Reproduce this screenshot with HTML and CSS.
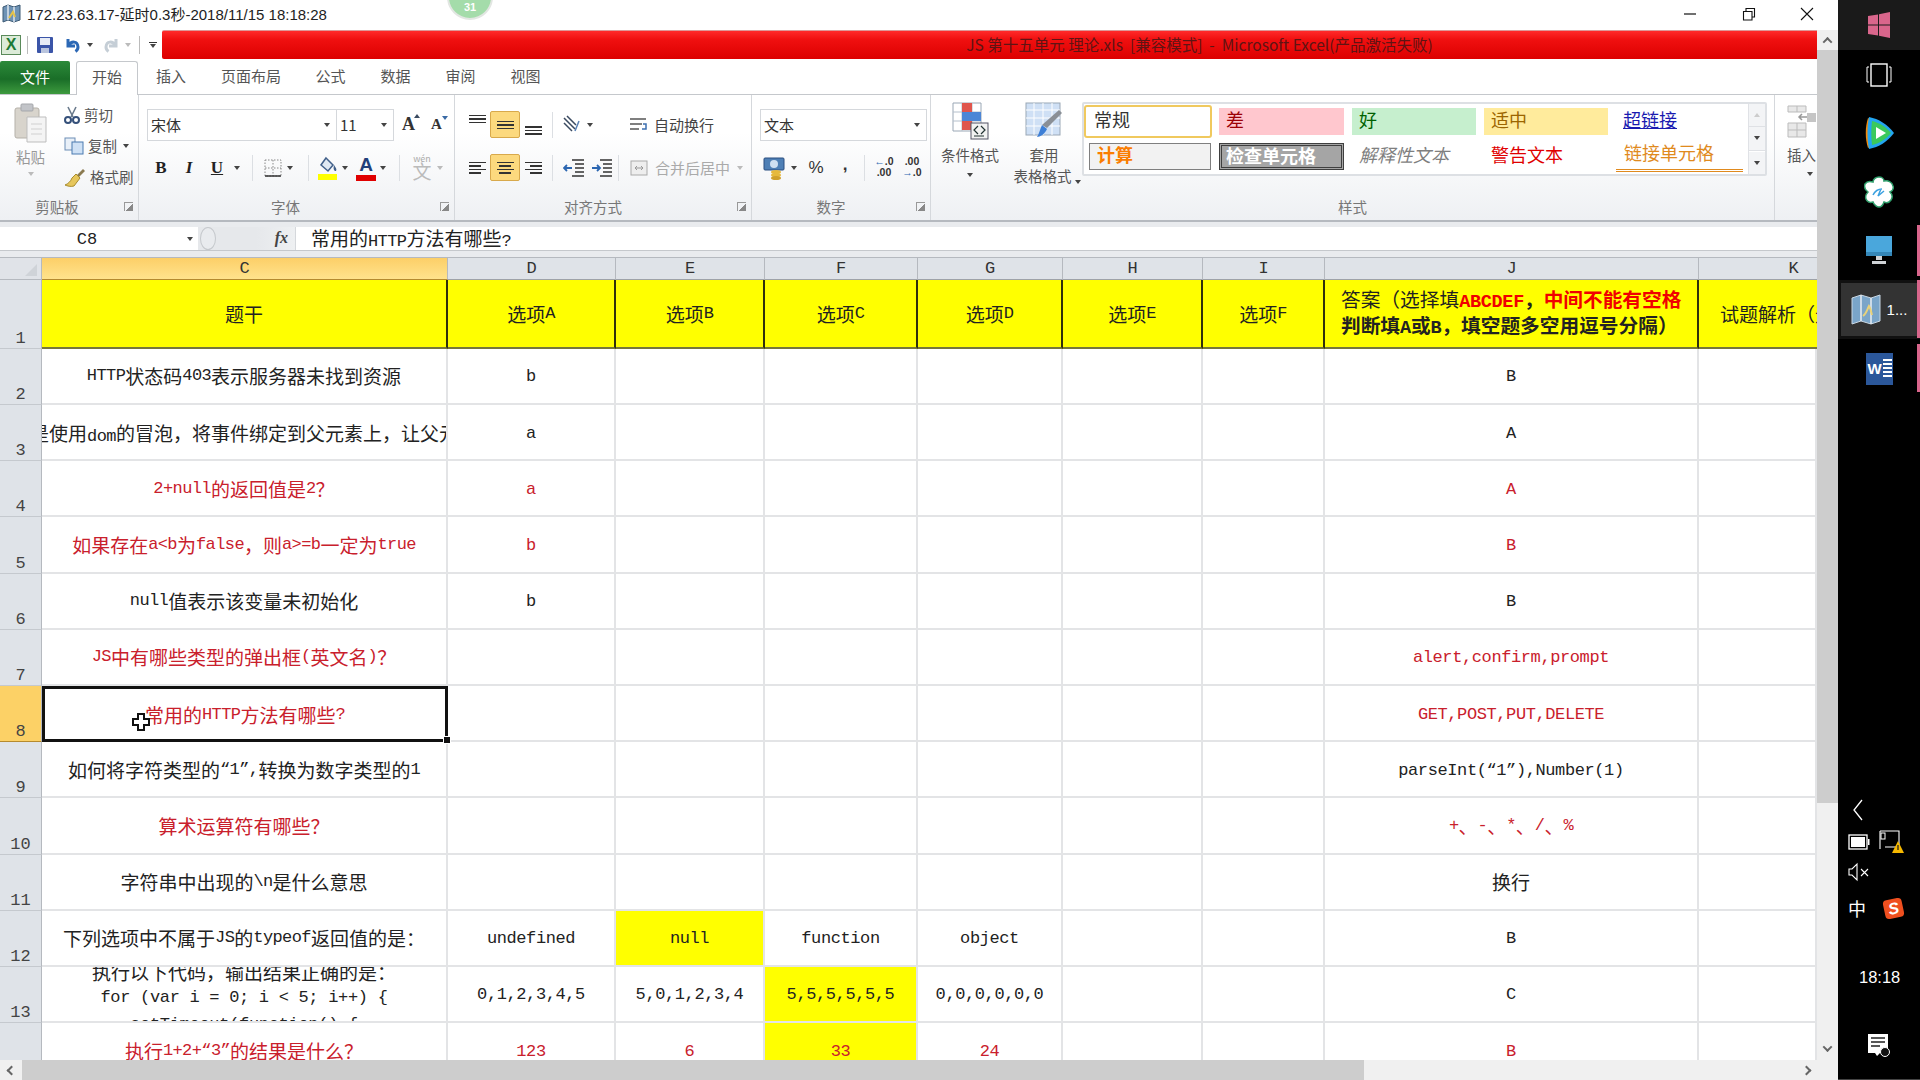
FILE: index.html
```html
<!DOCTYPE html>
<html lang="zh-CN">
<head>
    <meta charset="UTF-8">
    <title>JS 第十五单元 理论.xls - Microsoft Excel</title>
    <link rel="stylesheet" href="styles.css">
</head>
<body>
<div class="app">
    <div class="titlebar">
        <svg class="title-icon" width="19" height="19" viewBox="0 0 19 19"><path d="M1 3l5-2 6 2 6-2v15l-6 2-6-2-5 2z" fill="#6f93b5" stroke="#3d5a75"/><path d="M6 1v15M12 3v15" stroke="#dfe8ef" stroke-width="1.5"/><path d="M7 14l4-6 2 5" stroke="#e6c34a" stroke-width="2" fill="none"/></svg>
        <span class="title-text">172.23.63.17-延时0.3秒-2018/11/15 18:18:28</span>
        <div class="badge">31</div>
        <div class="win-btns">
            <svg width="14" height="14" viewBox="0 0 14 14"><path d="M1 7h12" stroke="#111" stroke-width="1.2"/></svg>
            <svg width="14" height="14" viewBox="0 0 14 14"><path d="M1.5 4.5h8.500v8.500h-8.500zM4 4.500v-3h8.500v8.500h-2.500" fill="none" stroke="#111" stroke-width="1.1"/></svg>
            <svg width="14" height="14" viewBox="0 0 14 14"><path d="M1 1l12 12M13 1l-12 12" stroke="#111" stroke-width="1.1"/></svg>
        </div>
    </div>

    <div class="main">
        <div class="workbook">
            <div class="qat">
                <span class="xl-logo">X</span>
                <i class="qat-sep"></i>
                <svg class="q-save" width="18" height="18" viewBox="0 0 18 18"><rect x="1" y="1" width="16" height="16" rx="1" fill="#3b55a8"/><rect x="4" y="2" width="10" height="7" fill="#e6ebf5"/><rect x="5" y="12" width="8" height="5" fill="#b9c4dd"/></svg>
                <svg class="q-undo" width="18" height="18" viewBox="0 0 18 18"><path d="M4 3v7h7M4.500 9.500c3-5 9-4.500 9.500 1.500 0 2-1 3.500-2.500 4.500" fill="none" stroke="#2c68b5" stroke-width="3"/></svg>
                <i class="caret q-car1"></i>
                <svg class="q-redo" width="18" height="18" viewBox="0 0 18 18"><path d="M14 3v7h-7M13.500 9.500c-3-5-9-4.500-9.500 1.500 0 2 1 3.500 2.500 4.500" fill="none" stroke="#c5ced6" stroke-width="3"/></svg>
                <i class="caret light q-car2"></i>
                <i class="qat-sep q-sep2"></i>
                <span class="q-more"><i></i><b class="caret"></b></span>
                <div class="redbar">JS 第十五单元 理论.xls&nbsp; [兼容模式]&nbsp; -&nbsp; Microsoft Excel(产品激活失败)</div>
            </div>

            <div class="tabs">
                <span class="tab-file">文件</span>
                <span class="tab tab-on">开始</span>
                <span class="tab t1">插入</span>
                <span class="tab t2">页面布局</span>
                <span class="tab t3">公式</span>
                <span class="tab t3">数据</span>
                <span class="tab t3">审阅</span>
                <span class="tab t3">视图</span>
            </div>

            <div class="ribbon">
                <!-- clipboard -->
                <div class="group g-clip">
                    <div class="group-body clip-body">
                        <div class="paste">
                            <svg width="34" height="40" viewBox="0 0 34 40"><rect x="1" y="5" width="24" height="30" rx="2" fill="#d8d4cc" stroke="#b5b1a9"/><rect x="7" y="1" width="12" height="7" rx="1" fill="#c2c4c8" stroke="#a5a7ab"/><path d="M13 14h19v25h-19z" fill="#f4f4f4" stroke="#bdbdbd"/><path d="M17 21h11M17 26h11M17 31h11" stroke="#d0d0d0"/></svg>
                            <span class="muted">粘贴</span>
                            <i class="caret light"></i>
                        </div>
                        <div class="clip-list">
                            <div class="clip-item"><svg width="16" height="18" viewBox="0 0 16 18"><path d="M4 1l5 10M12 1l-5 10" stroke="#6a7a8c" stroke-width="1.6"/><circle cx="4" cy="14" r="3" fill="none" stroke="#35507a" stroke-width="2"/><circle cx="12" cy="14" r="3" fill="none" stroke="#35507a" stroke-width="2"/></svg><span>剪切</span></div>
                            <div class="clip-item"><svg width="20" height="18" viewBox="0 0 20 18"><rect x="1" y="1" width="10" height="12" fill="#e9f0f8" stroke="#6d8db5"/><rect x="8" y="5" width="11" height="12" fill="#cfe1f5" stroke="#4b7ab0"/></svg><span>复制</span><i class="caret"></i></div>
                            <div class="clip-item"><svg width="22" height="20" viewBox="0 0 22 20"><path d="M13 8l6-6 2 2-6 6z" fill="#8a7a50"/><path d="M12 7l4 4-6 8c-3 1-7 0-9-1 3-1 6-4 7-7z" fill="#e6c65c" stroke="#a88c2e"/></svg><span>格式刷</span></div>
                        </div>
                    </div>
                    <div class="group-label pad-24">剪贴板<i class="launcher"></i></div>
                </div>

                <!-- font -->
                <div class="group g-font">
                    <div class="group-body">
                        <div class="rb-row">
                            <div class="combo combo-font"><span>宋体</span><i class="caret"></i></div>
                            <div class="combo combo-size"><span>11</span><i class="caret"></i></div>
                            <span class="grow">A<em class="tri up"></em></span>
                            <span class="grow small">A<em class="tri down"></em></span>
                        </div>
                        <div class="rb-row row2">
                            <span class="tb fmt"><b>B</b></span>
                            <span class="tb fmt"><i>I</i></span>
                            <span class="tb fmt"><u>U</u></span>
                            <i class="caret cw"></i>
                            <i class="sep s9"></i>
                            <span class="tb w22"><svg width="20" height="20" viewBox="0 0 20 20"><path d="M2 2h16v16h-16zM2 10h16M10 2v16" fill="none" stroke="#888" stroke-dasharray="1.500 1.500"/><path d="M2 18h16" stroke="#333" stroke-width="1.500"/></svg></span>
                            <i class="caret cw"></i>
                            <i class="sep s12"></i>
                            <span class="tb w22 ml8"><svg width="22" height="24" viewBox="0 0 22 24"><path d="M9 2l7 7-5 6-7-6z" fill="#dfe8f2" stroke="#41608a" stroke-width="1.500"/><path d="M17 9c2 3 3 4 2 6-2 0-3-2-2-6z" fill="#41608a"/><rect x="1" y="18" width="19" height="6" fill="#ffff00"/></svg></span>
                            <i class="caret cw"></i>
                            <span class="tb w22 ml4 color-a">A<em></em></span>
                            <i class="caret cw"></i>
                            <i class="sep s10"></i>
                            <span class="tb w24 wen"><small>wén</small>文</span>
                            <i class="caret cw light"></i>
                        </div>
                    </div>
                    <div class="group-label pad-22">字体<i class="launcher"></i></div>
                </div>

                <!-- alignment -->
                <div class="group g-align">
                    <div class="group-body">
                        <div class="rb-row">
                            <span class="tb"><span class="lines at-top"><i></i><i></i><i></i></span></span>
                            <span class="tb on"><span class="lines"><i></i><i></i><i></i></span></span>
                            <span class="tb"><span class="lines at-bot"><i></i><i></i><i></i></span></span>
                            <i class="sep a-sep"></i>
                            <span class="tb w34"><svg width="24" height="20" viewBox="0 0 24 20"><path d="M3 3l11 11M6 1l9 9M3 8l8 8" stroke="#3a4a60" stroke-width="1.500"/><path d="M14 16l4-10" stroke="#5a82b5" stroke-width="1.500"/></svg><i class="caret inline"></i></span>
                            <span class="wide-cmd"><svg width="18" height="18" viewBox="0 0 18 18"><path d="M1 3h16M1 8h12M1 13h9" stroke="#555" stroke-width="1.500"/><path d="M14 8h3v5h-4" fill="none" stroke="#3d6fb0" stroke-width="1.500"/></svg><span>自动换行</span></span>
                        </div>
                        <div class="rb-row row2">
                            <span class="tb"><span class="lines four ln-left"><i></i><i></i><i></i><i></i></span></span>
                            <span class="tb on"><span class="lines four"><i></i><i></i><i></i><i></i></span></span>
                            <span class="tb"><span class="lines four ln-right"><i></i><i></i><i></i><i></i></span></span>
                            <i class="sep a-sep"></i>
                            <span class="tb indent"><svg width="22" height="20" viewBox="0 0 22 20"><path d="M9 2h12M12 6h9M12 10h9M12 14h9M9 18h12" stroke="#333" stroke-width="1.500"/><path d="M9 10h-8M4 7l-3 3 3 3" fill="none" stroke="#2b66b1" stroke-width="1.800"/></svg></span>
                            <span class="tb indent"><svg width="22" height="20" viewBox="0 0 22 20"><path d="M9 2h12M12 6h9M12 10h9M12 14h9M9 18h12" stroke="#333" stroke-width="1.500"/><path d="M1 10h8M6 7l3 3-3 3" fill="none" stroke="#2b66b1" stroke-width="1.800"/></svg></span>
                            <i class="sep m-sep"></i>
                            <span class="wide-cmd off"><svg width="18" height="18" viewBox="0 0 18 18"><rect x="1" y="2" width="16" height="14" fill="#eee" stroke="#aaa"/><path d="M5 9h8M7 7l-2 2 2 2M11 7l2 2-2 2" fill="none" stroke="#999"/></svg><span>合并后居中</span><i class="caret light"></i></span>
                        </div>
                    </div>
                    <div class="group-label pad-20">对齐方式<i class="launcher"></i></div>
                </div>

                <!-- number -->
                <div class="group g-num">
                    <div class="group-body">
                        <div class="rb-row">
                            <div class="combo combo-num"><span>文本</span><i class="caret"></i></div>
                        </div>
                        <div class="rb-row row2">
                            <span class="tb"><svg width="22" height="24" viewBox="0 0 22 24"><rect x="1" y="2" width="20" height="12" rx="1" fill="#4e7fb5" stroke="#2a4f80"/><circle cx="11" cy="8" r="4" fill="#cfe0f2"/><ellipse cx="13" cy="16" rx="5" ry="2" fill="#e6b93c"/><ellipse cx="13" cy="19" rx="5" ry="2" fill="#e6b93c"/><ellipse cx="13" cy="22" rx="5" ry="2" fill="#d0a02a"/></svg></span>
                            <i class="caret cw"></i>
                            <span class="tb sym mlt">%</span>
                            <span class="tb sym comma">,</span>
                            <i class="sep s5"></i>
                            <span class="tb dec"><em>←</em>.0<br>.00</span>
                            <span class="tb dec">.00<br><em>→</em>.0</span>
                        </div>
                    </div>
                    <div class="group-label pad-20">数字<i class="launcher"></i></div>
                </div>

                <!-- styles -->
                <div class="group g-style">
                    <div class="group-body style-body">
                        <div class="big-cmd">
                            <svg width="37" height="38" viewBox="0 0 37 38"><path d="M1 1h28v28h-28z" fill="#fff" stroke="#9aa7b5"/><path d="M1 10h28M1 19h28M10 1v28M20 1v28" stroke="#b5c0cc"/><rect x="10" y="1" width="10" height="9" fill="#e0554c"/><rect x="10" y="10" width="10" height="9" fill="#4c86d6"/><rect x="20" y="10" width="9" height="9" fill="#4c86d6"/><rect x="10" y="19" width="10" height="9" fill="#e0554c"/><rect x="19" y="21" width="17" height="16" fill="#f2f2f2" stroke="#556"/><path d="M26 24l-4 4 4 4M22 34h10M29 24l4 4-4 4" fill="none" stroke="#233" stroke-width="1.200"/></svg>
                            <span>条件格式</span>
                            <i class="caret"></i>
                        </div>
                        <div class="big-cmd table-cmd">
                            <svg width="38" height="38" viewBox="0 0 38 38"><rect x="1" y="1" width="34" height="32" fill="#cfe0f5" stroke="#9aa7b5"/><path d="M1 8h34M1 16h34M1 24h34M9 1v32M18 1v32M27 1v32" stroke="#fff"/><path d="M34 8l3 3-15 15-5-3z" fill="#8a8f96"/><path d="M17 23l5 4c-2 5-7 8-10 8 2-3 3-8 5-12z" fill="#3d7fd6"/></svg>
                            <span>套用</span>
                            <span class="cmd-line">表格格式<i class="caret"></i></span>
                        </div>
                        <div class="gallery">
                            <div class="styles-grid">
                                <span class="st st-normal">常规</span>
                                <span class="st st-bad">差</span>
                                <span class="st st-good">好</span>
                                <span class="st st-neutral">适中</span>
                                <span class="st st-link">超链接</span>
                                <span class="st st-calc">计算</span>
                                <span class="st st-check">检查单元格</span>
                                <span class="st st-note">解释性文本</span>
                                <span class="st st-warn">警告文本</span>
                                <span class="st st-linked">链接单元格</span>
                            </div>
                            <div class="gal-scroll">
                                <span><i class="caret up light"></i></span>
                                <span><i class="caret"></i></span>
                                <span class="more"><i class="caret"></i></span>
                            </div>
                        </div>
                    </div>
                    <div class="group-label">样式</div>
                </div>

                <!-- cells -->
                <div class="group g-cells">
                    <div class="group-body insert">
                        <svg width="29" height="34" viewBox="0 0 29 34"><path d="M1 2h18v6h-18zM10 2v6M1 19h18v14h-18zM1 26h18M10 19v14" fill="#e8e8e8" stroke="#bbb"/><path d="M20 13h-8M15 10l-3 3 3 3" fill="none" stroke="#999" stroke-width="1.500"/><rect x="20" y="9" width="9" height="9" fill="#c5c5c5"/></svg>
                        <span>插入</span>
                        <i class="caret"></i>
                    </div>
                </div>
            </div>

            <div class="formula-bar">
                <div class="name-box"><span>C8</span><i class="caret"></i></div>
                <div class="fx-area"><i class="fx-knob"></i><em>fx</em></div>
                <div class="formula-input">常用的<span class="m">HTTP</span>方法有哪些<span class="m">?</span></div>
            </div>

            <div class="sheet">
                <div class="corner"><i></i></div>
                <div class="ch sel">C</div><div class="ch">D</div><div class="ch">E</div><div class="ch">F</div><div class="ch">G</div><div class="ch">H</div><div class="ch">I</div><div class="ch">J</div><div class="ch ch-k">K</div>

                <div class="rh">1</div>
                <div class="c hd">题干</div><div class="c hd">选项<span class="m">A</span></div><div class="c hd">选项<span class="m">B</span></div><div class="c hd">选项<span class="m">C</span></div><div class="c hd">选项<span class="m">D</span></div><div class="c hd">选项<span class="m">E</span></div><div class="c hd">选项<span class="m">F</span></div>
                <div class="c hd hd-answer"><div>答案（选择填<b class="red-b m">ABCDEF</b><b>，</b><b class="red-b">中间不能有空格</b><br><b>判断填<span class="m">A</span>或<span class="m">B</span>，填空题多空用逗号分隔）</b></div></div>
                <div class="c hd hd-left">试题解析（无</div>

                <div class="rh">2</div>
                <div class="c"><span class="m">HTTP</span>状态码<span class="m">403</span>表示服务器未找到资源</div><div class="c m">b</div><div class="c"></div><div class="c"></div><div class="c"></div><div class="c"></div><div class="c"></div><div class="c m">B</div><div class="c"></div>

                <div class="rh">3</div>
                <div class="c"><span class="nw">事件委托就是使用<span class="m">dom</span>的冒泡，将事件绑定到父元素上，让父元素响应事件</span></div><div class="c m">a</div><div class="c"></div><div class="c"></div><div class="c"></div><div class="c"></div><div class="c"></div><div class="c m">A</div><div class="c"></div>

                <div class="rh">4</div>
                <div class="c red"><span class="m">2+null</span>的返回值是<span class="m">2</span>？</div><div class="c m red">a</div><div class="c"></div><div class="c"></div><div class="c"></div><div class="c"></div><div class="c"></div><div class="c m red">A</div><div class="c"></div>

                <div class="rh">5</div>
                <div class="c red">如果存在<span class="m">a&lt;b</span>为<span class="m">false</span>，则<span class="m">a&gt;=b</span>一定为<span class="m">true</span></div><div class="c m red">b</div><div class="c"></div><div class="c"></div><div class="c"></div><div class="c"></div><div class="c"></div><div class="c m red">B</div><div class="c"></div>

                <div class="rh">6</div>
                <div class="c"><span class="m">null</span>值表示该变量未初始化</div><div class="c m">b</div><div class="c"></div><div class="c"></div><div class="c"></div><div class="c"></div><div class="c"></div><div class="c m">B</div><div class="c"></div>

                <div class="rh">7</div>
                <div class="c red"><span class="m">JS</span>中有哪些类型的弹出框<span class="m">(</span>英文名<span class="m">)</span>？</div><div class="c"></div><div class="c"></div><div class="c"></div><div class="c"></div><div class="c"></div><div class="c"></div><div class="c m red">alert,confirm,prompt</div><div class="c"></div>

                <div class="rh sel">8</div>
                <div class="c red active">常用的<span class="m">HTTP</span>方法有哪些<span class="m">?</span>
                    <i class="fill-handle"></i>
                    <svg class="cell-cursor" width="20" height="20" viewBox="0 0 20 20"><path d="M7 2h6v5h5v6h-5v5h-6v-5h-5v-6h5z" fill="#fff" stroke="#111" stroke-width="2"/></svg>
                </div><div class="c"></div><div class="c"></div><div class="c"></div><div class="c"></div><div class="c"></div><div class="c"></div><div class="c m red">GET,POST,PUT,DELETE</div><div class="c"></div>

                <div class="rh">9</div>
                <div class="c">如何将字符类型的<span class="m">“1”,</span>转换为数字类型的<span class="m">1</span></div><div class="c"></div><div class="c"></div><div class="c"></div><div class="c"></div><div class="c"></div><div class="c"></div><div class="c m">parseInt(“1”),Number(1)</div><div class="c"></div>

                <div class="rh">10</div>
                <div class="c red">算术运算符有哪些？</div><div class="c"></div><div class="c"></div><div class="c"></div><div class="c"></div><div class="c"></div><div class="c"></div><div class="c red ops"><span class="m">+</span>、<span class="m">-</span>、<span class="m">*</span>、<span class="m">/</span>、<span class="m">%</span></div><div class="c"></div>

                <div class="rh">11</div>
                <div class="c">字符串中出现的<span class="m">\n</span>是什么意思</div><div class="c"></div><div class="c"></div><div class="c"></div><div class="c"></div><div class="c"></div><div class="c"></div><div class="c">换行</div><div class="c"></div>

                <div class="rh">12</div>
                <div class="c">下列选项中不属于<span class="m">JS</span>的<span class="m">typeof</span>返回值的是：</div><div class="c m">undefined</div><div class="c m yl">null</div><div class="c m">function</div><div class="c m">object</div><div class="c"></div><div class="c"></div><div class="c m">B</div><div class="c"></div>

                <div class="rh">13</div>
                <div class="c code"><div class="code-lines">执行以下代码，输出结果正确的是：<br><span class="m">for (var i = 0; i &lt; 5; i++) {</span><br><span class="m">setTimeout(function() {</span></div></div><div class="c m">0,1,2,3,4,5</div><div class="c m">5,0,1,2,3,4</div><div class="c m yl">5,5,5,5,5,5</div><div class="c m">0,0,0,0,0,0</div><div class="c"></div><div class="c"></div><div class="c m">C</div><div class="c"></div>

                <div class="rh">14</div>
                <div class="c red">执行<span class="m">1+2+“3”</span>的结果是什么？</div><div class="c m red">123</div><div class="c m red">6</div><div class="c m red yl">33</div><div class="c m red">24</div><div class="c"></div><div class="c"></div><div class="c m red">B</div><div class="c"></div>
            </div>
        </div>

        <div class="vscroll">
            <span class="vs-btn"><i class="chev up"></i></span>
            <div class="vs-thumb"></div>
            <span class="vs-btn vs-end"><i class="chev down"></i></span>
        </div>
    </div>

    <div class="hscroll">
        <span class="hs-btn"><i class="chev left"></i></span>
        <div class="hs-thumb"></div>
        <span class="hs-btn hs-end"><i class="chev right"></i></span>
    </div>
</div>

<aside class="taskbar">
    <div class="task-top">
        <div class="task-item win">
            <svg width="22" height="26" viewBox="0 0 22 26"><path d="M0 4l10-1.500v10h-10zM11 2.300l11-2.300v12.500h-11zM0 13.500h10v10l-10-1.500zM11 13.500h11v12.500l-11-2.300z" fill="#d9668c"/></svg>
        </div>
        <div class="task-item view">
            <svg width="26" height="24" viewBox="0 0 26 24"><rect x="5" y="1" width="16" height="22" fill="none" stroke="#fff" stroke-width="1.400"/><path d="M3 4h-2v15h2M23 4h2v15h-2" fill="none" stroke="#fff"/></svg>
        </div>
        <div class="task-item first">
            <svg width="32" height="36" viewBox="0 0 32 36"><path d="M5 3c-3 9-3 21 0 30l4-2v-26z" fill="#f28a0c"/><path d="M6 2c10 2 18 7 25 16-7 9-15 14-25 16-2-9-2-23 0-32z" fill="#23a5f0"/><path d="M9 6c8 2 14 6 19 12-5 6-11 10-19 12-1-8-1-16 0-24z" fill="#3bc95c"/><path d="M13 12l10 6-10 6z" fill="#fff"/></svg>
        </div>
        <div class="task-item">
            <svg width="30" height="32" viewBox="0 0 30 32"><path d="M15 1c3 0 5 2 5 4 4-1 8 1 9 5 1 3-1 5-3 6 2 2 3 5 1 8-2 3-5 3-7 2-1 3-3 5-5 5s-5-2-6-5c-3 1-6 0-7-3-1-3 0-5 2-7-3-2-4-5-3-8 2-3 5-3 8-2 0-3 3-5 6-5z" fill="#fff" stroke="#2f9e6b" stroke-width="1.500"/><path d="M9 19c2-4 5-6 9-6M17 13l-3 7 6-5" fill="none" stroke="#3aa0e0" stroke-width="1.500"/></svg>
        </div>
        <div class="task-item">
            <svg width="28" height="32" viewBox="0 0 28 32"><rect x="1" y="1" width="26" height="20" fill="#4aa7dc"/><rect x="1" y="17" width="26" height="4" fill="#3587b8"/><path d="M11 21h6v4h-6zM7 26h14v3h-14z" fill="#cfd3d6"/></svg>
        </div>
        <div class="task-item active">
            <svg width="30" height="32" viewBox="0 0 30 32"><path d="M1 4l9-3 10 3 9-3v26l-9 3-10-3-9 3z" fill="#7aa5c9" stroke="#c9d7e3"/><path d="M10 1v26M20 4v26" stroke="#e8edf2" stroke-width="1.500"/><path d="M12 22c3-2 4-6 6-10 2 3 2 6 3 9" fill="none" stroke="#e8d27a" stroke-width="2"/></svg>
            <span>1...</span>
        </div>
        <div class="task-item">
            <span class="word"><b>W</b><i></i></span>
        </div>
    </div>
    <div class="tray">
        <svg class="tray-back" width="12" height="22" viewBox="0 0 12 22"><path d="M10 1l-8 10 8 10" fill="none" stroke="#fff" stroke-width="1.300"/></svg>
        <div class="tray-row">
            <svg width="22" height="16" viewBox="0 0 22 16"><rect x="1" y="1" width="18" height="14" fill="none" stroke="#fff" stroke-width="1.300"/><rect x="3" y="3" width="14" height="10" fill="#fff"/><rect x="20" y="5" width="1.500" height="6" fill="#fff"/></svg>
            <svg width="26" height="24" viewBox="0 0 26 24"><path d="M1 1h19v16h-14M1 1v18" fill="none" stroke="#fff" stroke-width="1.100"/><rect x="2" y="3" width="4" height="6" fill="none" stroke="#fff"/><path d="M13 23l6-12 6 12z" fill="#f6b800"/><path d="M19 15v5" stroke="#222" stroke-width="1.300"/></svg>
        </div>
        <div class="tray-row">
            <svg width="22" height="20" viewBox="0 0 22 20"><path d="M1 7h3l5-5v16l-5-5h-3z" fill="none" stroke="#fff" stroke-width="1.100"/><path d="M13 7l7 7M20 7l-7 7" stroke="#fff" stroke-width="1.100"/></svg>
        </div>
        <div class="tray-row ime">
            <span class="zh">中</span>
            <span class="sogou">S</span>
        </div>
        <div class="clock">18:18</div>
        <svg class="notify" width="24" height="26" viewBox="0 0 24 26"><path d="M1 1h20v19h-8l-3 3-2-3h-7z" fill="#fff"/><path d="M4 5h14M4 9h14M4 13h9" stroke="#222" stroke-width="1.300"/><circle cx="18" cy="19" r="4.500" fill="#111" stroke="#fff"/></svg>
    </div>
    <i class="tick t-a"></i><i class="tick t-b"></i><i class="tick t-c"></i>
</aside>
</body>
</html>
```

FILE: styles.css
```css
* {
    box-sizing: border-box;
}
html, body {
    margin: 0;
    height: 100%;
}
body {
    width: 1920px;
    height: 1080px;
    overflow: hidden;
    display: flex;
    background: #fff;
    color: #222;
    font-family: "Noto Sans CJK SC", "Liberation Sans", sans-serif;
    font-size: 14.5px;
}
i, em {
    font-style: normal;
}
.app {
    width: 1838px;
    display: flex;
    flex-direction: column;
}

/* title bar */
.titlebar {
    height: 30px;
    display: flex;
    align-items: center;
    padding: 0 0 3px 2px;
    position: relative;
    background: #fff;
}
.title-icon {
    margin-right: 6px;
}
.title-text {
    font-family: "Liberation Sans", "Noto Sans CJK SC", sans-serif;
    font-size: 15px;
    color: #222;
}
.badge {
    position: absolute;
    left: 447px;
    top: -26px;
    width: 46px;
    height: 46px;
    border-radius: 50%;
    background: #a4dcaa;
    border: 2px solid #e2e6e2;
    color: #fff;
    font-family: "Liberation Sans", sans-serif;
    font-weight: bold;
    font-size: 11px;
    display: flex;
    align-items: flex-end;
    justify-content: center;
    padding-bottom: 5px;
}
.win-btns {
    margin-left: auto;
    width: 155px;
    padding-right: 24px;
    display: flex;
    justify-content: space-between;
}

.main {
    height: 1030px;
    display: flex;
}
.workbook {
    width: 1817px;
    display: flex;
    flex-direction: column;
    background: #e9ebee;
}

/* quick access + red caption */
.qat {
    height: 30px;
    display: flex;
    align-items: center;
    padding: 0 0 0 1px;
    background: #fff;
}
.xl-logo {
    width: 20px;
    height: 20px;
    background: #dcebd8;
    border: 1px solid #5a8a5a;
    color: #1c7a35;
    font: bold 16px/18px "Liberation Sans", sans-serif;
    text-align: center;
}
.qat-sep {
    width: 1px;
    height: 18px;
    background: #bbb;
    margin-left: 6px;
}
.q-save {
    margin-left: 8px;
}
.q-undo {
    margin-left: 10px;
}
.q-car1 {
    margin-left: 5px;
}
.q-redo {
    margin-left: 9px;
}
.q-car2 {
    margin-left: 5px;
}
.q-sep2 {
    margin-left: 8px;
}
.q-more {
    width: 9px;
    margin-left: 8px;
    display: flex;
    flex-direction: column;
    align-items: center;
    gap: 1px;
}
.q-more i {
    width: 8px;
    height: 1.5px;
    background: #333;
}
.redbar {
    margin-left: auto;
    width: 1655px;
    height: 29px;
    background: linear-gradient(#ff2a2a, #f01010 30%, #dc0000);
    border-top: 1px solid #d99;
    border-radius: 2px 0 0 2px;
    color: #5e1414;
    font-size: 15.500px;
    display: flex;
    align-items: center;
    justify-content: center;
    padding: 0 0 2px 420px;
}

.caret {
    display: inline-block;
    width: 0;
    height: 0;
    border-left: 3px solid transparent;
    border-right: 3px solid transparent;
    border-top: 4px solid #444;
}
.caret.light {
    border-top-color: #bbb;
}
.caret.up {
    border-top: 0;
    border-bottom: 4px solid #ccc;
}

/* tabs */
.tabs {
    height: 35px;
    display: flex;
    align-items: flex-end;
    border-bottom: 1px solid #c5c8cc;
    color: #555;
    font-size: 15px;
    background: #fff;
}
.tab-file {
    width: 70px;
    height: 33px;
    padding-bottom: 2px;
    background: linear-gradient(#2c8a3a, #1a6e28 55%, #3d9a3e);
    color: #fff;
    border-radius: 2px 2px 0 0;
    display: flex;
    align-items: center;
    justify-content: center;
}
.tab {
    height: 33px;
    padding-bottom: 3px;
    display: flex;
    align-items: center;
    justify-content: center;
}
.tab-on {
    width: 62px;
    margin-left: 6px;
    height: 34px;
    margin-bottom: -1px;
    background: #fff;
    border: 1px solid #c5c8cc;
    border-bottom: 0;
    border-radius: 3px 3px 0 0;
}
.t1 {
    width: 66px;
}
.t2 {
    width: 94px;
}
.t3 {
    width: 65px;
}

/* ribbon */
.ribbon {
    height: 127px;
    display: flex;
    background: linear-gradient(#fff 30%, #eef0f3);
    border-bottom: 2px solid #b5b9bf;
    color: #555;
}
.group {
    display: flex;
    flex-direction: column;
    border-right: 1px solid #d5d8dc;
    flex-shrink: 0;
}
.group-body {
    height: 100px;
    padding: 14px 0 0 8px;
}
.group-label {
    flex: 1;
    position: relative;
    text-align: center;
    color: #777;
    font-size: 14.500px;
    line-height: 24px;
}
.pad-24 {
    padding-right: 24px;
}
.pad-22 {
    padding-right: 22px;
}
.pad-20 {
    padding-right: 20px;
}
.launcher {
    position: absolute;
    right: 5px;
    top: 7px;
    width: 9px;
    height: 9px;
    border-left: 1px solid #999;
    border-top: 1px solid #999;
    background: linear-gradient(135deg, transparent 55%, #888 55%);
}
.g-clip {
    width: 139px;
}
.g-font {
    width: 316px;
}
.g-align {
    width: 297px;
}
.g-num {
    width: 179px;
}
.g-style {
    width: 844px;
}
.g-cells {
    width: 42px;
    border-right: 0;
    overflow: hidden;
}

.clip-body {
    display: flex;
    padding: 8px 0 0 12px;
}
.paste {
    width: 37px;
    display: flex;
    flex-direction: column;
    align-items: center;
    gap: 5px;
    color: #999;
    font-size: 14.500px;
}
.muted {
    margin-top: -2px;
}
.clip-list {
    margin-left: 15px;
    display: flex;
    flex-direction: column;
    gap: 7px;
}
.clip-item {
    height: 24px;
    display: flex;
    align-items: center;
    gap: 4px;
    white-space: nowrap;
}
.clip-item .caret {
    margin-left: 2px;
}

.rb-row {
    display: flex;
    align-items: center;
    height: 32px;
}
.row2 {
    margin-top: 11px;
}
.combo {
    height: 32px;
    background: #fff;
    border: 1px solid #d5d8dc;
    display: flex;
    align-items: center;
    justify-content: space-between;
    padding: 0 6px 0 3px;
    color: #333;
    font-size: 15px;
}
.combo-font {
    width: 190px;
}
.combo-size {
    width: 58px;
    margin-left: -1px;
}
.combo-num {
    width: 167px;
}
.grow {
    position: relative;
    width: 27px;
    text-align: center;
    color: #333;
    font: bold 18px "Liberation Serif", serif;
    margin-left: 1px;
}
.grow.small {
    font-size: 15px;
}
.tri {
    position: absolute;
    right: 2px;
    top: 0;
    width: 0;
    height: 0;
    border-left: 3px solid transparent;
    border-right: 3px solid transparent;
}
.tri.up {
    border-bottom: 4px solid #3a4a60;
}
.tri.down {
    border-top: 4px solid #3a6aa5;
}

.tb {
    width: 28px;
    height: 27px;
    flex-shrink: 0;
    display: flex;
    align-items: center;
    justify-content: center;
    color: #222;
}
.tb.on {
    width: 30px;
    margin: 0 -1px;
    background: #fcd97e;
    border: 1px solid #d8a94c;
    border-radius: 2px;
}
.fmt {
    font: 17px "Liberation Serif", serif;
}
.fmt i {
    font-style: italic;
    font-weight: bold;
}
.fmt u {
    font-weight: bold;
}
.cw {
    margin: 0 3px;
    flex-shrink: 0;
}
.sep {
    width: 1px;
    height: 26px;
    background: #dcdfe3;
    flex-shrink: 0;
}
.s5 {
    margin: 0 5px;
}
.s9 {
    margin: 0 9px;
}
.s10 {
    margin: 0 10px;
}
.s12 {
    margin: 0 8px 0 12px;
}
.w22 {
    width: 22px;
}
.w24 {
    width: 24px;
}
.w34 {
    width: 34px;
    gap: 2px;
}
.ml8 {
    margin-left: 0;
}
.ml4 {
    margin-left: 4px;
}
.color-a {
    position: relative;
    color: #223f7a;
    font: bold 19px "Liberation Sans", sans-serif;
    padding-bottom: 5px;
}
.color-a em {
    position: absolute;
    left: 1px;
    right: 1px;
    bottom: 0;
    height: 6px;
    background: #e00000;
}
.wen {
    position: relative;
    color: #bbb;
    font-size: 19px;
    padding-top: 6px;
}
.wen small {
    position: absolute;
    top: 0;
    font-size: 9px;
    line-height: 10px;
    color: #aaa;
}

.lines {
    width: 17px;
    height: 20px;
    display: flex;
    flex-direction: column;
    justify-content: center;
    gap: 2px;
}
.lines i {
    height: 1.5px;
    background: #333;
}
.at-top {
    justify-content: flex-start;
}
.at-bot {
    justify-content: flex-end;
}
.four i {
    width: 17px;
}
.four i:nth-child(even) {
    width: 12px;
}
.four {
    align-items: center;
}
.ln-left {
    align-items: flex-start;
}
.ln-right {
    align-items: flex-end;
}
.a-sep {
    margin: 0 7px 0 5px;
}
.m-sep {
    margin: 0 11px 0 2px;
}
.wide-cmd {
    display: flex;
    align-items: center;
    gap: 7px;
    white-space: nowrap;
    color: #444;
    font-size: 15px;
}
.rb-row .w34 + .wide-cmd {
    margin-left: 35px;
}
.wide-cmd.off {
    color: #aaa;
}
.sym {
    color: #333;
    font: 17px "Liberation Sans", sans-serif;
}
.mlt {
    margin-left: 2px;
}
.comma {
    font-weight: bold;
    margin-left: 1px;
    padding-bottom: 6px;
}
.dec {
    display: block;
    font: bold 10.500px/11px "Liberation Sans", sans-serif;
    color: #333;
    text-align: center;
    padding-top: 2px;
}
.dec em {
    color: #2b66b1;
}

/* styles gallery */
.style-body {
    display: flex;
    padding: 7px 0 0 5px;
}
.big-cmd {
    width: 68px;
    display: flex;
    flex-direction: column;
    align-items: center;
    color: #555;
    font-size: 14.500px;
    line-height: 21px;
}
.big-cmd svg {
    margin-bottom: 4px;
}
.big-cmd .caret {
    margin-top: 8px;
}
.table-cmd {
    width: 76px;
    margin-left: 2px;
}
.cmd-line {
    white-space: nowrap;
    padding-left: 6px;
}
.cmd-line .caret {
    margin-left: 3px;
    vertical-align: middle;
}
.gallery {
    width: 685px;
    height: 74px;
    background: #fff;
    border: 2px solid #dde0e4;
    border-radius: 2px;
    display: flex;
}
.styles-grid {
    flex: 1;
    display: grid;
    grid-template-columns: 132px 133px 132px 132px 135px;
    grid-template-rows: 36px 34px;
    font-size: 18px;
}
.st {
    padding: 0 0 6px 7px;
    display: flex;
    align-items: center;
    white-space: nowrap;
    height: 27px;
    align-self: center;
    margin: 0 5px 0 3px;
}
.st-normal {
    height: 33px;
    margin: 0 4px 0 0;
    padding-left: 8px;
    border: 2px solid #f0c95e;
    border-radius: 3px;
    color: #333;
}
.st-bad {
    background: #ffc7ce;
    color: #9c0006;
}
.st-good {
    background: #c6efce;
    color: #006100;
}
.st-neutral {
    background: #ffeb9c;
    color: #9c6500;
}
.st-link {
    color: #1a1ab0;
    text-decoration: underline;
}
.st-calc {
    background: #f2f2f2;
    border: 1px solid #7f7f7f;
    color: #fa7d00;
    font-weight: bold;
    margin-left: 5px;
}
.st-check {
    background: #a5a5a5;
    border: 3px double #3f3f3f;
    color: #fff;
    font-weight: bold;
    padding-left: 4px;
    padding-bottom: 3px;
}
.st-note {
    color: #7f7f7f;
    font-style: italic;
    padding-left: 7px;
}
.st-warn {
    color: #e00000;
}
.st-linked {
    color: #e08a1e;
    padding-left: 8px;
    border-bottom: 3px double #e08a1e;
    height: 30px;
}
.gal-scroll {
    width: 17px;
    display: flex;
    flex-direction: column;
    background: #f3f4f6;
    border-left: 1px solid #e0e2e6;
}
.gal-scroll span {
    flex: 1;
    display: flex;
    align-items: center;
    justify-content: center;
    border-bottom: 1px solid #dfe1e5;
}
.gal-scroll .more {
    border-bottom: 0;
    border-top: 1px solid #fff;
}
.insert {
    padding: 9px 0 0 12px;
    display: flex;
    flex-direction: column;
    align-items: flex-start;
    white-space: nowrap;
    font-size: 14.500px;
    color: #555;
}
.insert span {
    margin-top: 6px;
}
.insert .caret {
    margin: 7px 0 0 20px;
}

/* formula bar */
.formula-bar {
    height: 24px;
    margin-top: 5px;
    display: flex;
    align-items: center;
    background: #fff;
    border-bottom: 1px solid #c5c8cc;
}
.name-box {
    width: 198px;
    height: 23px;
    position: relative;
    text-align: center;
    font: 17px/25px "Liberation Mono", monospace;
    padding-right: 24px;
}
.name-box .caret {
    position: absolute;
    right: 5px;
    top: 10px;
}
.fx-area {
    width: 98px;
    height: 23px;
    display: flex;
    align-items: center;
    justify-content: space-between;
    padding: 0 7px 0 2px;
    border-right: 1px solid #d5d8dc;
    background: linear-gradient(90deg, #e6e8eb 60%, #eef0f2);
}
.fx-knob {
    width: 16px;
    height: 23px;
    border-radius: 50%;
    border: 1px solid #c5c8cc;
    background: #e9ebee;
}
.fx-area em {
    font: italic bold 16px "Liberation Serif", serif;
    color: #444;
}
.formula-input {
    padding: 2px 0 0 15px;
    font-size: 19px;
    line-height: 23px;
    color: #222;
    white-space: nowrap;
}

/* sheet */
.sheet {
    margin-top: 6px;
    height: 804px;
    overflow: hidden;
    display: grid;
    grid-template-columns: 42px 406px 168px 149px 153px 145px 140px 122px 374px 118px;
    grid-template-rows: 22px 69px repeat(13, 56.200px);
    background: #fff;
    font-size: 19px;
    color: #222;
    border-top: 1px solid #b5b9bf;
}
.m {
    font-family: "Liberation Mono", monospace;
    font-size: 17px;
    letter-spacing: -0.6px;
}
.corner {
    background: #e0e3e8;
    border-right: 1px solid #b5b9bf;
    border-bottom: 1px solid #b5b9bf;
    position: relative;
}
.corner i {
    position: absolute;
    right: 4px;
    bottom: 3px;
    width: 0;
    height: 0;
    border-left: 12px solid transparent;
    border-bottom: 12px solid #cfd3d8;
}
.ch {
    background: #dfe3e8;
    border-right: 1px solid #b5b9bf;
    border-bottom: 1px solid #9ea2a8;
    text-align: center;
    font: 17px/22px "Liberation Mono", monospace;
    color: #333;
}
.ch-k {
    padding-left: 71px;
    border-right: 0;
}
.ch.sel {
    background: linear-gradient(#fccf68, #ffe38c);
    border-bottom-color: #b58a2e;
}
.rh {
    background: #dfe3e8;
    border-right: 1px solid #b5b9bf;
    border-bottom: 1px solid #c5c9ce;
    display: flex;
    align-items: flex-end;
    justify-content: center;
    font: 17px/19px "Liberation Mono", monospace;
    color: #444;
}
.rh.sel {
    background: #fcd166;
    border-bottom-color: #b58a2e;
}
.c {
    position: relative;
    display: flex;
    align-items: center;
    justify-content: center;
    overflow: hidden;
    white-space: nowrap;
    border-right: 2px solid #e3e4e6;
    border-bottom: 2px solid #e3e4e6;
    text-align: center;
}
.c.m {
    font-size: 17px;
    letter-spacing: -0.4px;
    padding-top: 2px;
}
.hd {
    background: #ff0;
    border-right: 2px solid #30300c;
    border-bottom: 2px solid #77773a;
}
.hd-answer {
    justify-content: flex-start;
    padding: 2px 0 0 16px;
    text-align: left;
    line-height: 22.500px;
    font-size: 19.700px;
}
.hd-answer b {
    font-weight: bold;
}
.hd-answer .m {
    font-size: 18.500px;
    font-weight: bold;
    letter-spacing: -0.3px;
}
.red-b {
    color: #f00000;
}
.hd-left {
    justify-content: flex-start;
    padding-left: 21px;
    border-right: 0;
}
.red {
    color: #c9202c;
}
.yl {
    background: #ff0;
}
.nw {
    flex-shrink: 0;
}
.code {
    align-items: flex-start;
}
.code-lines {
    line-height: 22.500px;
    margin-top: -6px;
    white-space: pre;
}
.code-lines .m {
    font-size: 17px;
    letter-spacing: -0.3px;
}
.active {
    overflow: visible;
    z-index: 1;
    border: 0;
    box-shadow: inset 0 0 0 3px #111;
}
.fill-handle {
    position: absolute;
    right: -3px;
    bottom: -2px;
    width: 6px;
    height: 6px;
    background: #111;
    border: 1px solid #fff;
    box-sizing: content-box;
}
.cell-cursor {
    position: absolute;
    left: 89px;
    top: 26px;
}

/* scrollbars */
.vscroll {
    width: 21px;
    display: flex;
    flex-direction: column;
    background: #f0f0f0;
}
.vs-btn {
    height: 20px;
    display: flex;
    align-items: center;
    justify-content: center;
    background: #f0f0f0;
}
.vs-thumb {
    height: 753px;
    background: #cdcdcd;
}
.vs-end {
    margin-top: auto;
    margin-bottom: 2px;
}
.hscroll {
    height: 20px;
    display: flex;
    background: #f0f0f0;
}
.hs-btn {
    width: 22px;
    display: flex;
    align-items: center;
    justify-content: center;
}
.hs-thumb {
    width: 1342px;
    background: #cdcdcd;
}
.hs-end {
    margin-left: auto;
    margin-right: 21px;
}
.chev {
    width: 7px;
    height: 7px;
    border-left: 2px solid #666;
    border-top: 2px solid #666;
}
.chev.up {
    transform: rotate(45deg) translate(1px, 1px);
}
.chev.down {
    transform: rotate(225deg) translate(1px, 1px);
}
.chev.left {
    transform: rotate(-45deg);
}
.chev.right {
    transform: rotate(135deg);
}

/* side taskbar */
.taskbar {
    position: relative;
    width: 82px;
    background: #000;
    color: #fff;
    display: flex;
    flex-direction: column;
    justify-content: space-between;
    border-bottom: 1px solid #444;
}
.task-item {
    height: 59px;
    display: flex;
    align-items: center;
    justify-content: center;
    gap: 6px;
    font: 15px "Liberation Sans", sans-serif;
}
.task-item.win {
    height: 50px;
    background: #1a1a1a;
}
.task-item.view {
    height: 50px;
}
.task-item.first {
    margin-top: 3px;
}
.task-item.active {
    background: #333;
}
.word {
    position: relative;
    width: 27px;
    height: 32px;
    background: #2b579a;
    display: flex;
    align-items: center;
    padding-left: 2px;
    font: bold 15px "Liberation Sans", sans-serif;
}
.word i {
    position: absolute;
    right: 1px;
    top: 6px;
    width: 9px;
    height: 20px;
    background: repeating-linear-gradient(#fff 0 2px, #2b579a 2px 4px);
}
.tick {
    position: absolute;
    right: 0;
    width: 3px;
    background: #d9668c;
}
.t-a {
    top: 225px;
    height: 51px;
}
.t-b {
    top: 280px;
    height: 58px;
}
.t-c {
    top: 344px;
    height: 48px;
}
.tray {
    display: flex;
    flex-direction: column;
    padding: 0 0 20px 10px;
}
.tray-back {
    margin-left: 4px;
    margin-bottom: 6px;
}
.tray-row {
    height: 30px;
    display: flex;
    align-items: center;
    gap: 9px;
}
.ime {
    margin-top: 6px;
    gap: 18px;
    font-size: 18px;
}
.sogou {
    width: 19px;
    height: 19px;
    background: #ef4f1f;
    border-radius: 4px;
    transform: rotate(-12deg);
    font: italic bold 16px/19px "Liberation Sans", sans-serif;
    text-align: center;
}
.clock {
    margin: 45px 0 0 11px;
    font: 16.500px "Liberation Sans", sans-serif;
}
.notify {
    margin: 46px 0 0 19px;
}
```
